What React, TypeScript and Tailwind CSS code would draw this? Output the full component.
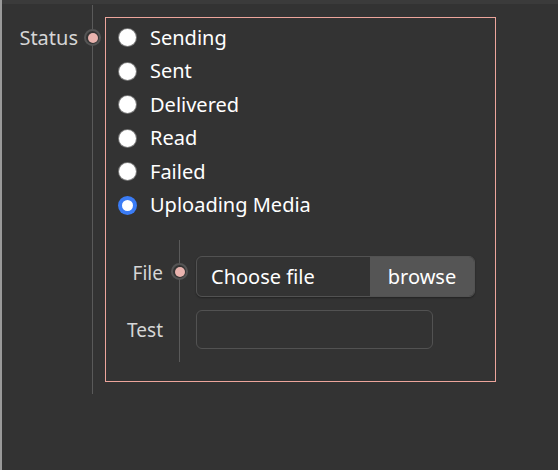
import { useState } from 'react'

const options = ['Sending', 'Sent', 'Delivered', 'Read', 'Failed', 'Uploading Media']

function Dot() {
  return (
    <span className="relative z-10 flex h-[17px] w-[17px] items-center justify-center rounded-full border-2 border-[#545454] bg-[#333333]">
      <span className="h-[10px] w-[10px] rounded-full bg-[#e9b3ae]" />
    </span>
  )
}

export default function App() {
  const [status, setStatus] = useState('Uploading Media')

  return (
    <div className="flex min-h-[470px] w-full bg-[#333333] font-['Noto_Sans',sans-serif]">
      <div className="w-[2px] bg-[#9a9a9a]" />
      <div className="flex-1">
        <div className="h-[4px] bg-[#3b3b3b]" />
        <div className="flex pt-[1px]">
          <div className="w-[76px] pt-[20px] text-right text-[20px] leading-[26px] text-[#d6d6d6]">Status</div>
          <div className="relative w-[27px]">
            <div className="absolute left-[14px] top-0 bottom-0 w-px bg-[#5a5a5a]" />
            <div className="absolute left-[6px] top-[24px]">
              <Dot />
            </div>
          </div>
          <div className="my-[12px] h-[365px] w-[391px] border border-[#eda59c] px-[12px] pt-[3px]">
            {options.map(o => (
              <label key={o} className="flex h-[33.5px] cursor-pointer items-center gap-[13px]">
                <span
                  className={
                    o === status
                      ? 'flex h-[19px] w-[19px] items-center justify-center rounded-full bg-[#3b7cf5]'
                      : 'flex h-[19px] w-[19px] items-center justify-center rounded-full bg-[#7a7a7a]'
                  }
                  onClick={() => setStatus(o)}
                >
                  <span className={o === status ? 'h-[11px] w-[11px] rounded-full bg-white' : 'h-[17px] w-[17px] rounded-full bg-white'} />
                </span>
                <span className="text-[20px] leading-[26px] text-white">{o}</span>
              </label>
            ))}
            <div className="mt-[18px] flex">
              <div className="flex w-[45px] flex-col pt-[16px] text-right text-[19px] leading-[26px] text-[#d6d6d6]">
                <div className="flex h-[41px] items-center justify-end pb-[8px]">File</div>
                <div className="mt-[13px] flex h-[39px] items-center justify-end">Test</div>
              </div>
              <div className="relative w-[33px]">
                <div className="absolute left-[16px] top-0 bottom-0 w-px bg-[#5a5a5a]" />
                <div className="absolute left-[8px] top-[23px]">
                  <Dot />
                </div>
              </div>
              <div className="flex flex-col pt-[16px] pb-[13px]">
                <div className="flex h-[41px] w-[279px] overflow-hidden rounded-[6px] border border-[#525252] shadow-[0_1px_2px_rgba(0,0,0,0.35)]">
                  <div className="flex flex-1 items-center pl-[14px] text-[20px] text-white">Choose file</div>
                  <div className="flex w-[104px] items-center justify-center bg-[#555555] text-[20px] text-white">browse</div>
                </div>
                <div className="mt-[13px] h-[39px] w-[237px] rounded-[6px] border border-[#525252]" />
              </div>
            </div>
          </div>
        </div>
      </div>
    </div>
  )
}
